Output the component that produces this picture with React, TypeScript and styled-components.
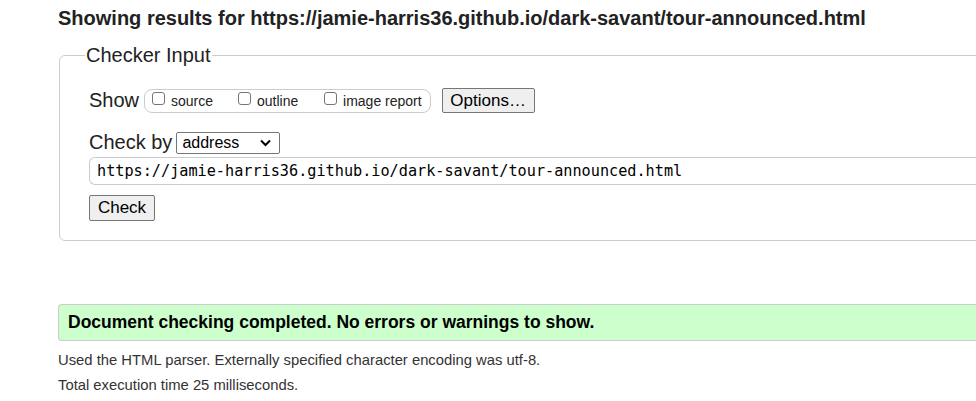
import React from "react";
import styled, { createGlobalStyle } from "styled-components";

const Global = createGlobalStyle`
  html, body { margin: 0; padding: 0; background: #fff; }
  body { font-family: "Liberation Sans", Arial, sans-serif; color: #222; overflow: hidden; }
`;

const Page = styled.div`
  padding: 6px 0 0 58px;
  width: 976px;
  height: 401px;
  box-sizing: border-box;
  overflow: hidden;
`;

const Heading = styled.h2`
  margin: 0;
  font-size: 20px;
  font-weight: bold;
  line-height: 24px;
  color: #222;
  white-space: nowrap;
`;

const Fieldset = styled.fieldset`
  margin: 14px -200px 0 1px;
  padding: 0 0 19px 29px;
  border: 1px solid #ccc;
  border-radius: 6px;
`;

const Legend = styled.legend`
  font-size: 20px;
  line-height: 23px;
  padding: 0 1px;
  margin-left: -4px;
  color: #222;
`;

const Row = styled.div<{ $mt: number }>`
  display: flex;
  align-items: center;
  margin-top: ${(p) => p.$mt}px;
`;

const Label = styled.span<{ $gap: number }>`
  font-size: 20px;
  line-height: 23px;
  margin-right: ${(p) => p.$gap}px;
  color: #222;
`;

const Pill = styled.div`
  display: flex;
  align-items: center;
  height: 22px;
  padding: 0 8px 0 7px;
  border: 1px solid #ccc;
  border-radius: 8px;
  margin-right: 11px;
`;

const CheckItem = styled.label<{ $w?: number }>`
  display: flex;
  align-items: center;
  ${(p) => (p.$w ? `width: ${p.$w}px;` : "")}
  font-size: 14px;
  color: #222;
  white-space: nowrap;
`;

const Box = styled.span`
  width: 13px;
  height: 13px;
  border: 1px solid #767676;
  border-radius: 3px;
  margin-right: 6px;
  margin-top: -4px;
  box-sizing: border-box;
  background: #fff;
`;

const Button = styled.button<{ $w: number; $h: number }>`
  font-family: "Liberation Sans", Arial, sans-serif;
  font-size: 17px;
  color: #000;
  background: #efefef;
  border: 1px solid #767676;
  border-radius: 2px;
  padding: 0;
  width: ${(p) => p.$w}px;
  height: ${(p) => p.$h}px;
`;

const Select = styled.div`
  display: flex;
  align-items: center;
  justify-content: space-between;
  width: 104px;
  height: 22px;
  box-sizing: border-box;
  border: 1px solid #767676;
  border-radius: 2px;
  padding: 0 8px 0 5px;
  font-size: 16px;
  color: #000;
`;

const UrlInput = styled.div`
  margin-top: 3px;
  height: 28px;
  box-sizing: border-box;
  border: 1px solid #ccc;
  border-right: none;
  border-radius: 6px 0 0 6px;
  padding: 0 0 0 7px;
  display: flex;
  align-items: center;
  font-family: "DejaVu Sans Mono", "Liberation Mono", monospace;
  font-size: 15.2px;
  color: #000;
  white-space: nowrap;
`;

const Success = styled.div`
  margin-top: 63px;
  margin-right: -10px;
  height: 37px;
  box-sizing: border-box;
  background: #ccffcc;
  border: 1px solid #ccc;
  border-right: none;
  border-radius: 4px 0 0 4px;
  padding-left: 9px;
  display: flex;
  align-items: center;
  font-size: 17.5px;
  font-weight: bold;
  color: #000;
  white-space: nowrap;
`;

const Info = styled.p<{ $mt: number }>`
  margin: ${(p) => p.$mt}px 0 0 0;
  font-size: 14.8px;
  line-height: 17px;
  color: #333;
  white-space: nowrap;
`;

export default function App() {
  return (
    <>
      <Global />
      <Page>
        <Heading>
          Showing results for https://jamie-harris36.github.io/dark-savant/tour-announced.html
        </Heading>
        <Fieldset>
          <Legend>Checker Input</Legend>
          <Row $mt={21}>
            <Label $gap={5}>Show</Label>
            <Pill>
              <CheckItem $w={86}>
                <Box />
                source
              </CheckItem>
              <CheckItem $w={86}>
                <Box />
                outline
              </CheckItem>
              <CheckItem>
                <Box />
                image report
              </CheckItem>
            </Pill>
            <Button $w={93} $h={25}>Options…</Button>
          </Row>
          <Row $mt={18}>
            <Label $gap={4}>Check by</Label>
            <Select>
              address
              <svg width="11" height="8" viewBox="0 0 11 8">
                <path d="M1 1.5 L5.5 6 L10 1.5" stroke="#000" strokeWidth="2" fill="none" />
              </svg>
            </Select>
          </Row>
          <UrlInput>https://jamie-harris36.github.io/dark-savant/tour-announced.html</UrlInput>
          <Row $mt={10}>
            <Button $w={66} $h={26}>Check</Button>
          </Row>
        </Fieldset>
        <Success>Document checking completed. No errors or warnings to show.</Success>
        <Info $mt={11}>Used the HTML parser. Externally specified character encoding was utf-8.</Info>
        <Info $mt={8}>Total execution time 25 milliseconds.</Info>
      </Page>
    </>
  );
}
